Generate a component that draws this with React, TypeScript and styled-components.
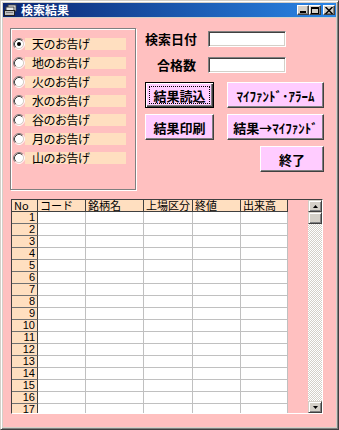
import React from "react";
import styled, { createGlobalStyle, css } from "styled-components";

const Global = createGlobalStyle`
  html, body { margin: 0; padding: 0; background: #d4d0c8; }
  body { font-family: "Noto Sans CJK JP", "Liberation Sans", sans-serif; }
  * { box-sizing: border-box; }
`;

const PINK = "#ffc0c0";
const PEACH = "#ffdfc0";
const VIOLET = "#ffccff";

const Window = styled.div`
  width: 339px;
  height: 430px;
  background: #d4d0c8;
  border: 1px solid;
  border-color: #d4d0c8 #404040 #404040 #d4d0c8;
  box-shadow: inset 1px 1px #fff, inset -1px -1px #808080;
  padding: 2px;
  display: flex;
  flex-direction: column;
`;

const TitleBar = styled.div`
  height: 14px;
  margin-bottom: 1px;
  display: flex;
  align-items: center;
  padding: 0 1px 0 1px;
  background: linear-gradient(to right, #0a2470, #2a86e6);
`;

const TitleText = styled.span`
  color: #fff;
  font-weight: bold;
  font-size: 12px;
  line-height: 14px;
  margin-left: 3px;
  flex: 1;
`;

const CaptionGroup = styled.div`
  display: flex;
  align-items: center;
`;

const CaptionButton = styled.div<{ $gap?: boolean }>`
  width: 12px;
  height: 10px;
  background: #d4d0c8;
  border: 1px solid;
  border-color: #fff #404040 #404040 #fff;
  box-shadow: inset -1px -1px #808080;
  display: flex;
  align-items: center;
  justify-content: center;
  margin-left: ${(p) => (p.$gap ? "2px" : "0")};
`;

const Client = styled.div`
  flex: 1;
  background: ${PINK};
  padding: 10px 0 0 7px;
  display: flex;
  flex-direction: column;
`;

const TopArea = styled.div`
  display: flex;
  align-items: flex-start;
`;

const GroupBox = styled.div`
  width: 126px;
  height: 162px;
  border: 1px solid #808080;
  box-shadow: inset 1px 1px #fff, 1px 1px #fff;
  padding: 9px 0 0 2px;
  display: flex;
  flex-direction: column;
  gap: 7px;
`;

const RadioRow = styled.div`
  display: flex;
  align-items: center;
  height: 12px;
`;

const RadioLabel = styled.span`
  width: 101px;
  height: 12px;
  background: ${PEACH};
  padding-left: 7px;
  font-size: 12px;
  line-height: 12px;
  letter-spacing: -0.5px;
  color: #000;
  white-space: nowrap;
`;

const Controls = styled.div`
  margin-left: 9px;
  padding-top: 3px;
  display: flex;
  flex-direction: column;
`;

const FieldRow = styled.div<{ $mb: number }>`
  display: flex;
  align-items: center;
  height: 16px;
  margin-bottom: ${(p) => p.$mb}px;
`;

const FieldLabel = styled.span`
  width: 63px;
  padding-right: 12px;
  text-align: right;
  font-weight: bold;
  font-size: 13px;
  line-height: 16px;
  color: #000;
  white-space: nowrap;
`;

const TextBox = styled.div`
  width: 78px;
  height: 16px;
  background: #fff;
  border: 1px solid;
  border-color: #808080 #fff #fff #808080;
  box-shadow: inset 1px 1px #404040, inset -1px -1px #d4d0c8;
`;

const ButtonGrid = styled.div`
  display: grid;
  grid-template-columns: 69px 97px;
  grid-auto-rows: 26px;
  column-gap: 13px;
  row-gap: 6px;
`;

const FormButton = styled.div<{ $default?: boolean; $exit?: boolean }>`
  background: ${VIOLET};
  border: 1px solid;
  border-color: #fff #404040 #404040 #fff;
  box-shadow: inset -1px -1px #808080;
  display: flex;
  align-items: center;
  justify-content: center;
  font-weight: bold;
  font-size: 13px;
  color: #000;
  white-space: nowrap;
  ${(p) =>
    p.$default &&
    css`
      border-color: #000;
      box-shadow: inset 1px 1px #fff, inset -1px -1px #404040,
        inset -2px -2px #808080;
      outline: 1px dotted #000;
      outline-offset: -5px;
    `}
  ${(p) =>
    p.$exit &&
    css`
      grid-column: 2;
      justify-self: end;
      width: 64px;
    `}
`;

const GridFrame = styled.div`
  width: 312px;
  height: 215px;
  margin: 9px 0 0 1px;
  border: 1px solid;
  border-color: #404040 #fff #fff #404040;
  display: flex;
`;

const Table = styled.div`
  width: 276px;
  height: 213px;
  overflow: hidden;
  display: grid;
  grid-template-columns: 26px 48px 58px 49px 48px 47px;
  grid-template-rows: 12px repeat(17, 12px);
`;

const HeadCell = styled.div`
  background: ${PEACH};
  border-right: 1px solid #404040;
  border-bottom: 1px solid #404040;
  font-size: 11px;
  line-height: 11px;
  padding-left: 2px;
  white-space: nowrap;
  color: #000;
`;

const RowHead = styled.div`
  background: ${PEACH};
  border-right: 1px solid #404040;
  border-bottom: 1px solid #707070;
  font-family: "Liberation Sans", sans-serif;
  font-size: 11px;
  line-height: 11px;
  text-align: right;
  padding-right: 2px;
  color: #000;
`;

const DataCell = styled.div`
  background: #fff;
  border-right: 1px solid #c0c0c0;
  border-bottom: 1px solid #c0c0c0;
`;

const GridGap = styled.div`
  flex: 1;
`;

const ScrollBar = styled.div`
  width: 14px;
  display: flex;
  flex-direction: column;
  background: repeating-conic-gradient(#d4d0c8 0 25%, #ffffff 0 50%) 0 0 / 2px 2px;
`;

const ScrollPart = styled.div<{ $h: number }>`
  height: ${(p) => p.$h}px;
  background: #d4d0c8;
  border: 1px solid;
  border-color: #d4d0c8 #404040 #404040 #d4d0c8;
  box-shadow: inset 1px 1px #fff, inset -1px -1px #808080;
  display: flex;
  align-items: center;
  justify-content: center;
`;

const Track = styled.div`
  flex: 1;
`;

const Radio = ({ checked }: { checked?: boolean }) => (
  <svg width="12" height="12" viewBox="0 0 12 12">
    <circle cx="6" cy="6" r="4.5" fill="#fff" />
    <path d="M2.11 9.89 A5.5 5.5 0 0 1 9.89 2.11" stroke="#808080" fill="none" />
    <path d="M9.89 2.11 A5.5 5.5 0 0 1 2.11 9.89" stroke="#fff" fill="none" />
    <path d="M2.82 9.18 A4.5 4.5 0 0 1 9.18 2.82" stroke="#404040" fill="none" />
    <path d="M9.18 2.82 A4.5 4.5 0 0 1 2.82 9.18" stroke="#d4d0c8" fill="none" />
    {checked && <circle cx="6" cy="6" r="2" fill="#000" />}
  </svg>
);

const TitleIcon = () => (
  <svg width="14" height="13" viewBox="0 0 14 13">
    <rect x="4" y="1" width="8" height="6" fill="#fff" stroke="#404040" />
    <rect x="2" y="3" width="8" height="6" fill="#e8e8e8" stroke="#404040" />
    <rect x="0.5" y="6.5" width="10" height="5" fill="#c0c0c0" stroke="#202020" />
    <rect x="2" y="8" width="7" height="1" fill="#808080" />
  </svg>
);

const radios = ["天", "地", "火", "水", "谷", "月", "山"];
const headers = ["No", "コード", "銘柄名", "上場区分", "終値", "出来高"];
const rows = Array.from({ length: 17 }, (_, i) => i + 1);

export default function App() {
  return (
    <>
      <Global />
      <Window>
        <TitleBar>
          <TitleIcon />
          <TitleText>検索結果</TitleText>
          <CaptionGroup>
            <CaptionButton>
              <svg width="6" height="6" viewBox="0 0 6 6">
                <rect x="0" y="4" width="6" height="2" fill="#000" />
              </svg>
            </CaptionButton>
            <CaptionButton>
              <svg width="8" height="7" viewBox="0 0 8 7">
                <rect x="0.5" y="0.5" width="7" height="6" fill="none" stroke="#000" />
                <rect x="0" y="0" width="8" height="2" fill="#000" />
              </svg>
            </CaptionButton>
            <CaptionButton $gap>
              <svg width="8" height="7" viewBox="0 0 8 7">
                <path d="M0.5 0 L7.5 7 M7.5 0 L0.5 7" stroke="#000" strokeWidth="1.5" />
              </svg>
            </CaptionButton>
          </CaptionGroup>
        </TitleBar>
        <Client>
          <TopArea>
            <GroupBox>
              {radios.map((r, i) => (
                <RadioRow key={r}>
                  <Radio checked={i === 0} />
                  <RadioLabel>{r}のお告げ</RadioLabel>
                </RadioRow>
              ))}
            </GroupBox>
            <Controls>
              <FieldRow $mb={10}>
                <FieldLabel>検索日付</FieldLabel>
                <TextBox />
              </FieldRow>
              <FieldRow $mb={9}>
                <FieldLabel>合格数</FieldLabel>
                <TextBox />
              </FieldRow>
              <ButtonGrid>
                <FormButton $default>結果読込</FormButton>
                <FormButton>ﾏｲﾌｧﾝﾄﾞ･ｱﾗｰﾑ</FormButton>
                <FormButton>結果印刷</FormButton>
                <FormButton>結果→ﾏｲﾌｧﾝﾄﾞ</FormButton>
                <FormButton $exit>終了</FormButton>
              </ButtonGrid>
            </Controls>
          </TopArea>
          <GridFrame>
            <Table>
              {headers.map((h) => (
                <HeadCell key={h}>{h}</HeadCell>
              ))}
              {rows.map((n) => (
                <React.Fragment key={n}>
                  <RowHead>{n}</RowHead>
                  <DataCell />
                  <DataCell />
                  <DataCell />
                  <DataCell />
                  <DataCell />
                </React.Fragment>
              ))}
            </Table>
            <GridGap />
            <ScrollBar>
              <ScrollPart $h={12}>
                <svg width="5" height="3" viewBox="0 0 5 3">
                  <path d="M2.5 0 L5 3 L0 3 Z" fill="#000" />
                </svg>
              </ScrollPart>
              <ScrollPart $h={12} />
              <Track />
              <ScrollPart $h={12}>
                <svg width="5" height="3" viewBox="0 0 5 3">
                  <path d="M0 0 L5 0 L2.5 3 Z" fill="#000" />
                </svg>
              </ScrollPart>
            </ScrollBar>
          </GridFrame>
        </Client>
      </Window>
    </>
  );
}
